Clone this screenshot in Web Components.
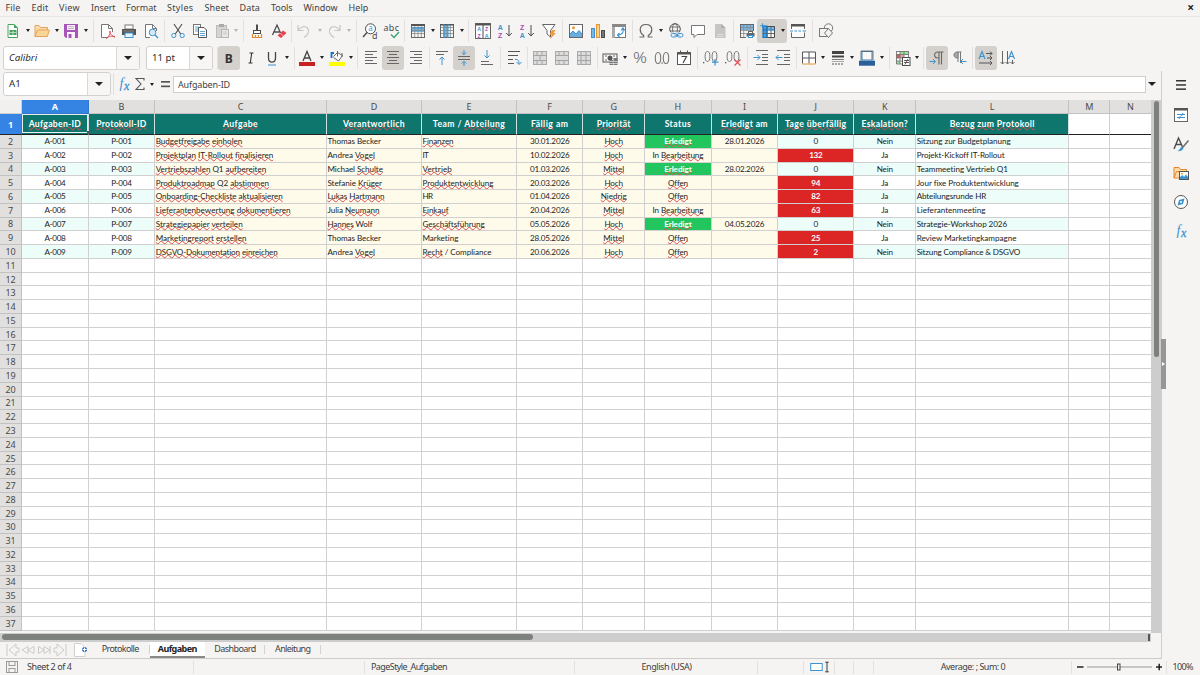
<!DOCTYPE html>
<html lang="de">
<head>
<meta charset="utf-8">
<title>Aufgaben</title>
<style>
    html, body {
        margin: 0;
        height: 675px;
        overflow: hidden;
        background: #f5f4f3;
        color: #424242;
        font: 9px/1 "Noto Sans", sans-serif;
    }
</style>
</head>
<body>
<calc-window></calc-window>

<script>
const K = '#4c4c4c';
const B = '#3b93d2';

const line = (d, c = K, w = 1) => `<path d="${d}" fill="none" stroke="${c}" stroke-width="${w}"/>`;
const fill = (d, c = K) => `<path d="${d}" fill="${c}"/>`;
const box = (x, y, w, h, f = 'none', s = 'none') => `<rect x="${x}" y="${y}" width="${w}" height="${h}" fill="${f}" stroke="${s}"/>`;
const glyph = (x, y, size, text, c = K, extra = '') => `<text x="${x}" y="${y}" font-size="${size}" fill="${c}" font-family="Noto Sans" ${extra}>${text}</text>`;
const letter = (x, y, size, text, c) => `<text x="${x}" y="${y}" font-size="${size}" fill="${c}" font-family="Liberation Sans" font-weight="700">${text}</text>`;
const gridLines = line('M1.500 4.500H14.500M1.500 7.500H14.500M1.500 10.500H14.500M4.700 2V14M8 2V14M11.300 2V14', '#888', .8) + box(1.5, 1.5, 13, 13, 'none', '#666');
const mergeIcon = inner => box(1.5, 1.5, 13, 13, '#dcdcdc', '#aaa') + line('M1.500 5.500H14.500M1.500 10.500H14.500' + inner, '#a4a4a4');

// All icons share a 16 x 16 box
const ICONS = {
    new: fill('M2.500 1.500H9L13 5.500V14.500H2.500Z', '#fff') + line('M3 1.500H9L12.500 5V14.500H3Z', '#45a45c') + fill('M9 1L13 5H9Z', '#45a45c') + box(4.5, 7, 7, 5, '#45a45c') + line('M5 9.500H11M8 7.500V12', '#d9f2df', .7),
    open: fill('M1 13.500V2.500H5L6.500 4.500H13V7', '#fbdca8') + line('M1 13.500V2.500H5L6.500 4.500H13.500V7', '#e2a45b') + fill('M1 14L3.500 7H15.500L13.500 14Z', '#fbd596') + line('M1 13.500L3.500 7H15.300L13.300 13.500Z', '#e2a45b'),
    save: fill('M1 1H15V15H3L1 13Z', '#a855ba') + box(4, 2, 8, 5, '#fbf4fc') + box(4, 9, 8, 6, '#fbf4fc') + line('M5 3.700H11M5 5.500H11', '#b99bc2', .8) + box(5.5, 11, 3, 4, '#a855ba'),
    pdf: fill('M2.500 1.500H9.500L13 5V14.500H2.500Z', '#fff') + line('M9 14.500H2.500V1.500H9.500L13.500 5.500V9M9.500 1.500V5.500H13.500', '#777') + line('M7.500 15.500C11 12 11.500 10 11 8C10.300 10 12.500 13 16 14C13 12.500 10 13 7.500 15.500Z', '#d9383f', .9),
    print: box(4, 2, 8, 4, '#fff', '#777') + fill('M1 6H15V12H1Z', '#555') + box(4, 10, 8, 4.5, '#e8f3fb', B) + line('M2.500 8H13', '#999', .7),
    preview: fill('M2.500 1.500H9.500L13 5V14.500H2.500Z', '#fff') + line('M7 14.500H2.500V1.500H9.500L13.500 5.500V8M9.500 1.500V5.500H13.500', '#777') + '<circle cx="9.500" cy="9.500" r="3.300" fill="#d5eaf8" stroke="#3b93d2"/>' + line('M12 12L15 15', B, 1.4),
    cut: line('M4 1L10.700 11M12 1L5.300 11', K, 1.1) + '<circle cx="3.800" cy="12.500" r="2.100" fill="none" stroke="#3b93d2"/><circle cx="12.200" cy="12.500" r="2.100" fill="none" stroke="#3b93d2"/>',
    copy: box(1.5, 1.5, 7, 10, '#fff', '#777') + line('M3 4H7M3 6H7M3 8H7', B, .8) + fill('M6.500 4.500H12L14.500 7V14.500H6.500Z', '#fff') + line('M6.500 4.500H12L14.500 7V14.500H6.500Z', '#555') + line('M8 8.500H13M8 10.500H13M8 12.500H13', B, .8),
    paste: box(2.5, 2.5, 10, 12, '#d4d4d4', '#bcbcbc') + box(5, 1, 5, 3, '#aaa') + box(7.5, 6.5, 7, 8, '#e9e9e9', '#b5b5b5') + line('M9 9H13M9 11H13', '#bbb', .8),
    brush: line('M8 1.500V7', K, 2) + box(4.5, 7.5, 7, 3, '#fff', K) + fill('M3.500 11H12.500V15H3.500Z', '#fff') + line('M3.500 11V14.500H12.500V11M6.500 12V14.500M9.500 12V14.500', '#e7852b', 1.2),
    clear: line('M1.500 12L6 2L10.500 12M3.500 9H8.500', K, 1.3) + fill('M6.500 12.500L12 7.500L15.500 10L10 15Z', '#e7404c') + line('M9 10L12.500 13', '#fff', .6),
    undo: line('M2 2V7.500H7.500M2.500 7C5 3.500 9 2.500 11.500 5C14 8 12 12 8 14.500', '#c6c6c6', 1.2),
    redo: line('M14 2V7.500H8.500M13.500 7C11 3.500 7 2.500 4.500 5C2 8 4 12 8 14.500', '#c6c6c6', 1.2),
    find: '<circle cx="8.500" cy="5.800" r="5" fill="#fff" stroke="#4c4c4c"/>' + line('M5 9.500L1 14', K, 1.4) + glyph(6.2, 8.4, 8, 'a', B) + glyph(10, 15.5, 9, 'd'),
    spell: glyph(-.5, 8, 9, 'abc', K, 'textLength="15.500"') + line('M7 11.500L10 14.500L15 9', '#36a66a', 1.3),
    row: box(1, 5, 14, 4, '#76b9e8') + gridLines + line('M1 5H15', B) + box(1, 1, 14, 2, '#555'),
    column: box(5, 1, 4, 14, '#76b9e8') + gridLines + box(1, 1, 14, 1.500, '#555') + line('M5 1V15M9 1V15', B),
    sort: box(.5, .5, 15, 15, '#fff', '#666') + box(.5, .5, 15, 2, '#555') + line('M8 1V15') + letter(2.2, 8.4, 5.3, 'A', B) + letter(2.4, 14.700, 5.3, 'Z', '#b345bb') + letter(9.900, 8.4, 5.3, 'Z', '#b345bb') + letter(9.700, 14.700, 5.3, 'A', B),
    asc: letter(.800, 6.5, 7, 'A', B) + letter(1, 15, 7, 'Z', '#b345bb') + line('M12 2V12.500M9.200 10L12 13L14.800 10'),
    desc: letter(1, 6.5, 7, 'Z', '#b345bb') + letter(.800, 15, 7, 'A', B) + line('M12 2V12.500M9.200 10L12 13L14.800 10'),
    filter: fill('M1.500 1.500H14L9.500 7.500V14L6 11V7.500Z', '#fff') + line('M1.500 1.500H14L9.500 7.500V14L6 11V7.500Z', '#666') + fill('M11 7H14.500L12.500 10H15L9 16L10.700 11.500H8.500Z', '#ef9b38'),
    image: box(1.5, 1.5, 13, 13, '#fff', '#666') + fill('M2 14V11L5 8L8 11L11 7.500L14 11V14Z', '#68afe0') + line('M2 11L5 8L8 11L11 7.500L14 11', B) + '<circle cx="5.500" cy="4.800" r="1.500" fill="#ef9b38"/>',
    chart: box(1.5, 5.5, 3, 9, '#76b9e8', B) + box(6.5, 1.5, 3, 13, '#fbd08d', '#e7952f') + box(11.5, 7.5, 3, 7, '#777', K),
    pivot: box(1.5, 1.5, 13, 13, '#fff', '#777') + box(1, 1, 14, 3, '#888') + box(1, 4, 3, 11, '#aaa') + line('M12 5.500C13 9 11 12 7 12M10 7.500L12 5L14 7.500M8.500 10L6.500 12L8.500 14', B, 1.1),
    omega: line('M1.500 14H5.700V12.500C3.500 11 2.200 9 2.200 6.700C2.200 3.500 4.500 1.500 8 1.500S13.800 3.500 13.800 6.700C13.800 9 12.500 11 10.300 12.500V14H14.500', '#666', 1.2),
    link: '<circle cx="7" cy="6" r="5.300" fill="none" stroke="#555"/><ellipse cx="7" cy="6" rx="2.400" ry="5.300" fill="none" stroke="#555" stroke-width=".8"/>' + line('M2 4H12M2 8H12', '#555', .8) + box(2, 9.500, 13, 5, '#f5f4f3') + '<rect x="3" y="10.500" width="6" height="3.500" rx="1.700" fill="none" stroke="#3b93d2"/><rect x="9" y="10.500" width="6" height="3.500" rx="1.700" fill="none" stroke="#3b93d2"/>' + line('M6.500 12.200H11.500', B),
    comment: fill('M1.500 2.500H14.500V11.500H7L4 14.500V11.500H1.500Z', '#fff') + line('M1.500 2.500H14.500V11.500H7L4 14.500V11.500H1.500Z', '#777'),
    header: fill('M3 1H9.500L13.500 5V15H3Z', '#c6c6c6') + fill('M9.500 1L13.500 5H9.500Z', '#aaa') + line('M5 11.500H11.500M5 13.500H11.500', '#ddd'),
    range: box(1, 1, 14, 6, '#76b9e8') + gridLines + box(7, 8, 9, 8, '#f5f4f3') + box(7.500, 10, 8, 3.5, '#666') + box(9.5, 8.500, 4, 2, '#fff', '#666') + box(9.5, 12.500, 4, 2, '#fff', B),
    freeze: box(3, 3, 12, 12, '#f8f8f8') + box(3, 3, 12, 4, '#76b9e8') + box(3, 3, 4, 12, '#4a9bdb') + line('M3 10.500H15M7 3V15M11 3V15', '#666') + line('M7 3.500H14.500V14.500H7', K) + line('M3 3H7V15M3 7H15M3 3V14.500H7', '#1872bd', 1.2) + line('M2.500 .300V5M.200 2.700H5', B),
    split: box(1.5, 1.5, 13, 13, '#fbfbfb') + line('M1.500 6V1.500H14.500V6M1.500 9.500V14.500H14.500V9.500', '#666') + box(1, 1, 14, 2.5, '#555') + line('M0 8H3M4.500 8H7M8.500 8H11M12.500 8H16', B, 1),
    shapes: '<circle cx="10.500" cy="5" r="4.200" fill="#f5f4f3" stroke="#777"/>' + box(1.5, 5.5, 8, 8, '#f5f4f3', '#777') + fill('M10.500 5.500L15 10L10.500 14.500L6 10Z', '#f5f4f3') + line('M10.500 5.500L14.500 10L10.500 14.500L6.500 10Z', '#777'),
    bold: glyph(3.800, 12.7, 13, 'B', '#333', 'font-weight="700" textLength="8" lengthAdjust="spacingAndGlyphs"'),
    italic: line('M6.500 3H10.500M5.500 13H9.500M8.700 3L7.300 13', '#333', 1.1),
    underline: line('M4.500 2V8C4.500 13.500 11.500 13.500 11.500 8V2', '#444', 1.3) + line('M4 15H12', B, 1),
    fontColor: line('M4 11L8 1.500L12 11M5.500 8H10.500', '#444', 1.3) + box(0, 12, 16, 4, '#c9211e'),
    fillColor: fill('M5 6L9 2.500L14 6L10 10.500Z', '#fff') + line('M4.500 6.500L8.500 2.500L13.500 5.500L9.500 11L4.500 7.500M8.500 1V6.500M13 3V7', '#666') + line('M2.500 8V3H5', '#1872bd', 1.8) + box(0, 12, 16, 4, '#ffff00'),
    left: line('M2 1.500H14M2 4.500H10M2 7.500H14M2 10.500H10M2 13.500H14', '#666'),
    center: line('M2 1.500H14M4 4.500H12M2 7.500H14M4 10.500H12M2 13.500H14', '#666'),
    right: line('M2 1.500H14M6 4.500H14M2 7.500H14M6 10.500H14M2 13.500H14', '#666'),
    top: line('M2 1.500H14M2 4.500H10', '#666') + line('M8 15V7M5.500 9.500L8 7L10.500 9.500', B),
    middle: line('M2 6.500H14M2 9.500H14', '#666') + line('M8 0V4.500M5.800 2.500L8 4.700L10.200 2.500M8 16V11.500M5.800 13.500L8 11.300L10.200 13.500', B),
    bottom: line('M2 11.500H10M2 14.500H14', '#666') + line('M8 0V8M5.500 5.500L8 8L10.500 5.500', B),
    wrap: line('M2 1.500H14M2 5.500H12M2 9.500H7M2 13.500H8', '#555') + line('M9 9.500C12 9 13 10.500 13 14M10.500 12L13 14.500L15.500 12', B),
    merge1: mergeIcon('M5 5.500V1.500M10 5.500V1.500M8 5.500V10.500M5 10.500V14.500M10 10.500V14.500'),
    merge2: mergeIcon('M5 5.500V1.500M10 5.500V1.500M5 10.500V14.500M10 10.500V14.500'),
    merge3: mergeIcon('M5 14.500V1.500M10 14.500V1.500'),
    currency: box(1, 4, 14, 8, '#fafafa', '#555') + '<circle cx="8" cy="8" r="2.500" fill="#555"/>' + line('M3 6H5M3 10H5M11 6H13', '#666') + box(7.5, 10, 3.5, 5, '#777') + box(11.5, 8, 4, 7, '#777') + line('M7.500 11.500H15.500M7.500 13.500H15.500', '#fff', .6),
    percent: glyph(1, 13, 14, '%', '#666', 'textLength="14" lengthAdjust="spacingAndGlyphs" font-weight="300"'),
    number: '<ellipse cx="4" cy="8" rx="2.700" ry="5.500" fill="none" stroke="#777" stroke-width="1.100"/><ellipse cx="12" cy="8" rx="2.700" ry="5.500" fill="none" stroke="#777" stroke-width="1.100"/><rect x="7.500" y="12.500" width="1.200" height="1.200" fill="#555"/>',
    date: box(1.5, 2.5, 13, 12, '#fff', '#555') + box(1, 2, 14, 2.5, '#555') + line('M4.500 .500V3M11.500 .500V3', '#555') + line('M5.500 6.500H10.500L7 13', '#444', 1.2),
    addDecimal: box(0, 12, 1.300, 1.300, '#555') + '<ellipse cx="4.500" cy="6.500" rx="2.400" ry="5" fill="none" stroke="#777"/><ellipse cx="11.500" cy="6.500" rx="2.400" ry="5" fill="none" stroke="#777"/>' + line('M12 9V15.500M9 12.200H15.500', B, 1.2),
    delDecimal: box(0, 12, 1.300, 1.300, '#555') + '<ellipse cx="4.500" cy="6.500" rx="2.400" ry="5" fill="none" stroke="#777"/><ellipse cx="11.500" cy="6.500" rx="2.400" ry="5" fill="none" stroke="#777"/>' + line('M9.500 9.500L15.500 15.500M15.500 9.500L9.500 15.500', '#e34b53', 1.1),
    indent: line('M3 .500H15M9 4.500H15M9 7.500H15M9 10.500H15M3 14.500H15', '#666') + line('M.500 7.500H7M4.500 5L7 7.500L4.500 10', B),
    outdent: line('M2 .500H15M9 4.500H15M9 7.500H15M9 10.500H15M2 14.500H15', '#666') + line('M7.500 7.500H1M3.500 5L1 7.500L3.500 10', B),
    border: box(2, 2, 12, 12, '#fff') + line('M1.500 13.500V2H14.500V13.500M8 2V13.500M1.500 8H14.500', '#555') + line('M1.500 14H14.500', '#e7952f'),
    lineStyle: box(2, 1, 12, 3, '#444') + box(2, 5.500, 12, 2, '#444') + line('M2 9.500H14', '#777', 1) + line('M2 11.500H14', '#aaa', 1) + line('M2 14H14', '#555', 1.2).replace('/>', ' stroke-dasharray="2 1"/>'),
    borderColor: box(3, 1.500, 10, 8.500, '#f8f8f8', '#4280b5') + line('M2 10.500V1H14V10.500', '#555', .8) + box(0, 10.700, 16, 5, '#2a6099'),
    conditional: box(1, 1, 13, 13, '#fff') + box(1, 4, 4, 4, '#de5a5a') + box(5, 1, 9, 3.5, '#9be39b') + box(5, 4.5, 4, 3.5, '#f0a0a0') + box(1, 11, 4, 3, '#9be39b') + line('M1 4.500H14M1 8H8M1 11H8M5 1V14M9 1V7M1.500 1V14H8M13.500 1V7M1 1.500H14', '#777', .9) + box(7.500, 7.500, 7.500, 8, '#fff', K) + line('M9 10.500H14M9 12.500H14M13 9L10 14.500', K, .9),
    ltr: line('M14.500 2H9C4.500 2 4.500 8 9 8H10M10 2V14.500M12.500 2V14.500', '#666', 1.1) + line('M.500 11.500H6M4 9L6.500 11.500L4 14', B),
    rtl: fill('M7.500 2C1.500 1.500 1.500 8 7.500 8Z', '#aaa') + line('M10.500 2H6C2 2 2 8 6 8H7M7 2V12M9.500 2V13', '#777') + line('M15.500 11.500H9.500M12 9L9.500 11.500L12 14', B),
    textLtr: line('M1 9L4 1.500L7 9M2 6.500H6', B, 1.2) + line('M8 3.500H14M12 1.500L14 3.500L12 5.500M9 8H14M12 6L14 8L12 10M1 13H14M12 11L14 13L12 15', '#555'),
    textTtb: line('M8.500 9L11.500 1.500L14.500 9M9.500 6.500H13.500', B, 1.2) + line('M2.500 1V14M.500 12L2.500 14L4.500 12M7.500 1V14M5.500 12L7.500 14L9.500 12M12.500 10V14M10.500 12L12.500 14L14.500 12', '#666'),
    func: '<text x="3.500" y="12" font-family="Liberation Serif" font-style="italic" font-size="14" fill="#3b93d2">f</text><text x="8" y="13.500" font-family="Liberation Serif" font-style="italic" font-size="12" fill="#3b93d2" stroke="#3b93d2" stroke-width=".300">x</text>',
    sigma: line('M12 4.500V2.500H4L9 8L4 13.500H12V11.500', '#555', 1.1),
    equals: box(4, 5, 9, 1.7, '#555') + box(4, 9.500, 9, 1.7, '#555'),
    hamburger: box(3, 3, 10, 1.500, '#333') + box(3, 7.200, 10, 1.500, '#333') + box(3, 11.400, 10, 1.500, '#333'),
    properties: box(1.5, 1.5, 13, 13, '#fff', '#666') + box(1, 1, 14, 2.500, '#555') + line('M4 7.500H12M4 10.500H12M10 6L8.500 9M7.500 9L6 12', B, 1),
    styles: line('M1 13L5.500 2L10 12M3 8.500H8.500', K, 1.4) + line('M15.500 4.500L10 11', '#777', 1.7) + fill('M4 15C7 15 6.500 11.500 9 11C12 12 9 16 4 15Z', B),
    gallery: fill('M1 13V2H6L7.500 4H13V13Z', '#fbdca8') + line('M1 13V2.500H6L7.500 4.500H13.500V6M1 13H6M1 13L3.500 6.500H14', '#e7852b') + box(6.5, 6.500, 9, 8, '#fff', '#555') + fill('M7 14V12L9.500 10L11 12L13 9.500L15 12V14Z', B) + '<circle cx="9" cy="8.700" r=".900" fill="#e7952f"/>',
    navigator: '<circle cx="8" cy="8" r="6.500" fill="#fff" stroke="#555"/>' + fill('M11.500 4.500L10 10L4.500 11.500L6 6Z', B) + '<circle cx="8" cy="8" r="1" fill="#fff"/>',
    disk: box(2.5, 2.5, 11, 11, '#f5f4f3', '#999') + box(5, 2.5, 6, 4, 'none', '#999') + box(5, 9.5, 6, 4, 'none', '#999'),
    selection: box(.7, 4.500, 11.5, 7, '#fff', B),
    cursor: line('M6 2.500H10M6 13.500H10M8 2.500V13.500', '#333', 1.1),
};

class TbIcon extends HTMLElement {
    constructor() {
        super();
        this.attachShadow({ mode: 'open' });
    }

    connectedCallback() {
        this.shadowRoot.innerHTML = `
            <style>
                :host { display: block; flex: none; width: 16px; height: 16px; }
                svg { display: block; width: 100%; height: 100%; overflow: visible; }
            </style>
            <svg viewBox="0 0 16 16">${ICONS[this.getAttribute('name')] || ''}</svg>
        `;
    }
}
customElements.define('tb-icon', TbIcon);

class DropArrow extends HTMLElement {
    constructor() {
        super();
        this.attachShadow({ mode: 'open' });
        this.shadowRoot.innerHTML = `
            <style>
                :host { display: flex; justify-content: center; align-items: center; flex: none; color: #222; }
                i { border: solid transparent; border-width: 3px 2.500px 0; border-top-color: currentColor; }
                :host([big]) i { border-width: 4px 4px 0; border-top-color: currentColor; }
                :host([dim]) i { opacity: .3; }
            </style>
            <i></i>
        `;
    }
}
customElements.define('drop-arrow', DropArrow);

/**
 * Items are separated by spaces: name:width[:arrowWidth][:flags].
 * A "|" item is a separator, flag "on" is a pressed button, "dim" a disabled arrow.
 */
class ToolStrip extends HTMLElement {
    constructor() {
        super();
        this.attachShadow({ mode: 'open' });
    }

    connectedCallback() {
        const items = this.getAttribute('items').trim().split(/\s+/).map(item => {
            const [name, width, arrow, flag] = item.split(':');
            if (name === '|') {
                return `<span class="sep" style="width:${width}px"></span>`;
            }
            const menu = +arrow ? `<drop-arrow style="width:${arrow}px" ${flag === 'dim' ? 'dim' : ''}></drop-arrow>` : '';
            return `<span class="tool ${flag === 'on' ? 'on' : ''}"><span class="icon" style="width:${width}px"><tb-icon name="${name}"></tb-icon></span>${menu}</span>`;
        });
        this.shadowRoot.innerHTML = `
            <style>
                :host { display: flex; align-items: center; height: 27px; }
                .tool { display: flex; align-items: center; height: 24px; border-radius: 3px; }
                .on { background: #d4d0cc; }
                .icon { display: flex; justify-content: center; }
                drop-arrow { height: 24px; }
                .sep { height: 22px; background: linear-gradient(#e2e0de, #e2e0de) center / 1px 100% no-repeat; }
            </style>
            ${items.join('')}
        `;
    }
}
customElements.define('tool-strip', ToolStrip);

class ComboBox extends HTMLElement {
    constructor() {
        super();
        this.attachShadow({ mode: 'open' });
        this.shadowRoot.innerHTML = `
            <style>
                :host {
                    display: flex; box-sizing: border-box; height: 24px; flex: none;
                    border: 1px solid #d3d0cd; border-radius: 3px; background: #fff; overflow: hidden;
                    font-size: 9.700px; color: #2e2e2e;
                }
                .text { flex: 1; padding-left: 5px; line-height: 21px; }
                drop-arrow { width: 22px; background: #f7f6f5; border-left: 1px solid #dad7d4; }
            </style>
            <span class="text"><slot></slot></span><drop-arrow big></drop-arrow>
        `;
    }
}
customElements.define('combo-box', ComboBox);

// Text run with a known width; the difference goes into the letter spacing
class FitText extends HTMLElement {
    constructor() {
        super();
        this.attachShadow({ mode: 'open' });
        this.shadowRoot.innerHTML = `
            <style>
                :host { display: inline-block; white-space: nowrap; }
                ::slotted(u) {
                    text-decoration: underline wavy #e04a4a .600px;
                    text-decoration-skip-ink: none;
                    text-underline-offset: -.800px;
                }
            </style>
            <slot></slot>
        `;
    }

    connectedCallback() {
        const target = parseFloat(this.getAttribute('width'));
        if (!target) {
            return;
        }
        const natural = this.getBoundingClientRect().width;
        const spacing = (target - natural) / this.textContent.length;
        this.style.letterSpacing = `${spacing.toFixed(3)}px`;
    }
}
customElements.define('fit-text', FitText);

class MenuBar extends HTMLElement {
    constructor() {
        super();
        this.attachShadow({ mode: 'open' });
    }

    connectedCallback() {
        const menus = [['File', 15, 11], ['Edit', 17, 10.5], ['View', 21, 11], ['Insert', 24.5, 10.5], ['Format', 30.5, 10.5], ['Styles', 26.5, 11], ['Sheet', 24.5, 10.5], ['Data', 20.5, 11], ['Tools', 21.5, 11], ['Window', 34, 11], ['Help', 20, 0]];
        this.shadowRoot.innerHTML = `
            <style>
                :host { display: flex; box-sizing: border-box; height: 17px; padding: 0 6px 0 5.500px; border-bottom: 1px solid #e9e7e5; line-height: 16px; }
                b { margin-left: auto; font-size: 12px; color: #222; }
            </style>
            ${menus.map(([name, w, gap]) => `<fit-text width="${w}" style="margin-right:${gap}px">${name}</fit-text>`).join('')}
            <b>×</b>
        `;
    }
}
customElements.define('menu-bar', MenuBar);

const COLUMNS = [
    ['A', 66.5], ['B', 66.5], ['C', 171.7], ['D', 95.1], ['E', 95.2], ['F', 66], ['G', 62],
    ['H', 66.5], ['I', 66.5], ['J', 76.2], ['K', 61.8], ['L', 153], ['M', 41.2], ['N', 41.3],
];

// An underscore before a word marks it for the spell checker
const HEADERS = [
    ['_Aufgaben-ID', 52.5], ['_Protokoll-ID', 50.5], ['_Aufgabe', 35], ['_Verantwortlich', 62],
    ['Team / _Abteilung', 72.5], ['_Fällig am', 37.5], ['_Priorität', 34], ['Status', 26.5],
    ['_Erledigt am', 47], ['_Tage _überfällig', 61.5], ['_Eskalation?', 46.5], ['_Bezug _zum _Protokoll', 85],
];

const ROWS = [
    ['_Budgetfreigabe _einholen', 86.5, 'Thomas Becker', 53.5, '_Finanzen', 31, '30.01.2026', '_Hoch', '_Erledigt', '28.01.2026', '0', 'Nein', 'Sitzung zur Budgetplanung', 94],
    ['_Projektplan _IT-Rollout _finalisieren', 117.5, 'Andrea _Vogel', 47.5, 'IT', 5.5, '10.02.2026', '_Hoch', 'In _Bearbeitung', '', '132', 'Ja', 'Projekt-Kickoff IT-Rollout', 87.5],
    ['_Vertriebszahlen Q1 _aufbereiten', 110.5, 'Michael _Schulte', 55.5, '_Vertrieb', 29.5, '01.03.2026', '_Mittel', '_Erledigt', '28.02.2026', '0', 'Nein', 'Teammeeting Vertrieb Q1', 91.5],
    ['_Produktroadmap Q2 _abstimmen', 113.5, 'Stefanie _Krüger', 54.5, '_Produktentwicklung', 71, '20.03.2026', '_Hoch', '_Offen', '', '94', 'Ja', 'Jour fixe Produktentwicklung', 102],
    ['_Onboarding-Checkliste _aktualisieren', 127, '_Lukas _Hartmann', 57, 'HR', 10, '01.04.2026', '_Niedrig', '_Offen', '', '82', 'Ja', 'Abteilungsrunde HR', 69.5],
    ['_Lieferantenbewertung _dokumentieren', 135, 'Julia _Neumann', 52, '_Einkauf', 26, '20.04.2026', '_Mittel', 'In _Bearbeitung', '', '63', 'Ja', 'Lieferantenmeeting', 69],
    ['_Strategiepapier _verteilen', 87, '_Hannes Wolf', 45, '_Geschäftsführung', 62, '05.05.2026', '_Hoch', '_Erledigt', '04.05.2026', '0', 'Nein', 'Strategie-Workshop 2026', 90.5],
    ['_Marketingreport _erstellen', 91, 'Thomas Becker', 53.5, 'Marketing', 36, '28.05.2026', '_Mittel', '_Offen', '', '25', 'Ja', 'Review Marketingkampagne', 100],
    ['_DSGVO-Dokumentation _einreichen', 122, 'Andrea _Vogel', 47.5, '_Recht / Compliance', 69, '20.06.2026', '_Hoch', '_Offen', '', '2', 'Nein', 'Sitzung Compliance &amp; DSGVO', 103.5],
];

const WIDTHS = {
    '_Hoch': 18.5, '_Mittel': 20.5, '_Niedrig': 26, '_Erledigt': 27.5, 'In _Bearbeitung': 51,
    '_Offen': 19.5, 'Nein': 16, 'Ja': 7, '0': 4.5, '132': 13, '94': 9, '82': 9, '63': 9, '25': 9, '2': 4.5,
};

const run = (text, width) => text ? `<fit-text width="${width}">${text.replace(/_(\S+)/g, '<u>$1</u>')}</fit-text>` : '';

class SheetGrid extends HTMLElement {
    constructor() {
        super();
        this.attachShadow({ mode: 'open' });
    }

    connectedCallback() {
        this.shadowRoot.innerHTML = `
            <style>
                :host {
                    display: grid; width: 1151px; box-sizing: border-box; overflow: hidden;
                    grid-template-columns: 22.200px ${COLUMNS.map(([, w]) => w + 'px').join(' ')};
                    grid-template-rows: 14px 21px repeat(36, 13.772px);
                }
                div {
                    box-sizing: border-box; display: flex; align-items: center; justify-content: center;
                    min-width: 0; min-height: 0; white-space: nowrap; line-height: 12px;
                    border-right: 1px solid #d0d0d0; border-bottom: 1px solid #d0d0d0;
                }
                .corner { background: #f1f0ef; border-color: #cfcfcf; }
                .col, .num { background: #e1e0df; color: #4a4a4a; border-color: #c2c2c2; font-size: 9px; }
                .sel { background: #3584e4; color: #fff; border-color: #2f77cf; }
                .col.sel, .num.sel { font-weight: 700; }
                .num { padding-top: 1px; }
                .cell { background: #fff; color: #222; font: 8.100px/12px Lato, sans-serif; }
                .head { background: #0f766e; color: #fff; font-size: 8.600px; font-weight: 700; border-right-color: #cfe0de; }
                .first { border-bottom-color: #222; }
                .text { justify-content: flex-start; padding-left: .500px; }
                .mint { background: #edfdf9; }
                .cream { background: #fffbeb; }
                .done { background: #22c55e; color: #fff; font-weight: 700; }
                .late { background: #dc2626; color: #fff; font-weight: 700; }
                .active { position: relative; }
                .active::before { content: ""; position: absolute; inset: 0 0 1px 0; border: 1px solid #e8efee; }
                .active::after { content: ""; position: absolute; right: -2px; bottom: 0; width: 3px; height: 3px; background: #555; }
            </style>
            <div class="corner"></div>
            ${COLUMNS.map(([name]) => `<div class="col ${name === 'A' ? 'sel' : ''}">${name}</div>`).join('')}
            ${this.#headerRow()}
            ${ROWS.map((row, i) => this.#dataRow(row, i)).join('')}
            ${this.#emptyRows(11, 37)}
        `;
    }

    #headerRow() {
        const cells = HEADERS.map(([text, w], i) => `<div class="cell head first ${i ? '' : 'active'}">${run(text, w)}</div>`);
        return `<div class="num sel first">1</div>${cells.join('')}<div class="cell first"></div><div class="cell first"></div>`;
    }

    #dataRow(row, index) {
        const [task, taskW, person, personW, team, teamW, due, priority, status, closed, late, escalation, topic, topicW] = row;
        const shade = index % 2 ? '' : 'mint';
        const id = String(index + 1).padStart(3, '0');
        const cells = [
            [shade, `A-${id}`, 21],
            [shade, `P-${id}`, 20.5],
            ['cream text', task, taskW],
            ['cream text', person, personW],
            ['cream text', team, teamW],
            ['cream', due, 39.5],
            ['cream', priority, WIDTHS[priority]],
            [status === '_Erledigt' ? 'done' : 'cream', status, WIDTHS[status]],
            ['cream', closed, 39.5],
            [late === '0' ? shade : 'late', late, WIDTHS[late]],
            [shade, escalation, WIDTHS[escalation]],
            [`${shade} text`, topic, topicW],
            ['', '', 0],
            ['', '', 0],
        ];
        return `<div class="num">${index + 2}</div>` + cells.map(([cls, text, w]) => `<div class="cell ${cls}">${run(text, w)}</div>`).join('');
    }

    #emptyRows(from, to) {
        let html = '';
        for (let n = from; n <= to; n++) {
            html += `<div class="num">${n}</div>` + '<div class="cell"></div>'.repeat(COLUMNS.length);
        }
        return html;
    }
}
customElements.define('sheet-grid', SheetGrid);

class SheetTabs extends HTMLElement {
    constructor() {
        super();
        this.attachShadow({ mode: 'open' });
        this.shadowRoot.innerHTML = `
            <style>
                :host { display: flex; height: 16px; line-height: 14px; border-bottom: 1px solid #cdcbc9; }
                .nav { width: 62px; margin-left: 5.500px; }
                svg { display: block; }
                .add { width: 24px; margin-left: 6.500px; }
                .tab { box-sizing: border-box; display: flex; justify-content: center; height: 16px; background: linear-gradient(#d3d1cf, #d3d1cf) right 3px / 1px 9px no-repeat; }
                .wide { padding-right: 7px; }
                .active { background: #fff; font-weight: 700; color: #222; border-bottom: 2px solid #8a8a8a; }
            </style>
            <div class="nav"><svg width="62" height="16" fill="none" stroke="#cdcbc9"><path d="M1 2V14M10 2L3 8L10 14V10H13V6H10ZM22 4.500L16 8L22 11.500ZM28 4.500L22 8L28 11.500ZM32.500 4.500V11.500L38 8ZM38 4.500V11.500L44 8ZM44 4V12M48 6V10H51V14L58 8L51 2V6ZM60 2V14"/></svg></div>
            <div class="add"><svg width="16" height="16"><path d="M.500 1.500H7L11 5.500V14.500H.500Z" fill="#fff" stroke="#d3d1cf"/><circle cx="10.500" cy="7.500" r="2.500" fill="#2f6db5"/><path d="M10.500 5.500V9.500M8.500 7.500H12.500" stroke="#fff"/></svg></div>
            <div class="tab wide" style="width:51.500px"><fit-text width="37">Protokolle</fit-text></div>
            <div class="tab active" style="width:55.500px"><fit-text width="39">Aufgaben</fit-text></div>
            <div class="tab" style="width:60px"><fit-text width="41.500">Dashboard</fit-text></div>
            <div class="tab" style="width:55.500px"><fit-text width="35.500">Anleitung</fit-text></div>
        `;
    }
}
customElements.define('sheet-tabs', SheetTabs);

class SideBar extends HTMLElement {
    constructor() {
        super();
        this.attachShadow({ mode: 'open' });
        this.shadowRoot.innerHTML = `
            <style>
                :host { display: flex; flex-direction: column; align-items: center; flex: 1; gap: 13px; padding-top: 5.500px; box-sizing: border-box; border-left: 1px solid #d0cecc; position: relative; }
                tb-icon:nth-of-type(2) { margin-top: 1.500px; }
                .handle { position: absolute; left: -1px; top: 268px; width: 5px; height: 50px; background: #979695; display: flex; align-items: center; }
                .handle::after { content: ""; border: solid transparent; border-width: 2.500px 0 2.500px 3px; border-left-color: #fff; margin-left: 1px; }
            </style>
            <tb-icon name="hamburger"></tb-icon>
            <tb-icon name="properties"></tb-icon>
            <tb-icon name="styles"></tb-icon>
            <tb-icon name="gallery"></tb-icon>
            <tb-icon name="navigator"></tb-icon>
            <tb-icon name="func"></tb-icon>
            <span class="handle"></span>
        `;
    }
}
customElements.define('side-bar', SideBar);

class StatusBar extends HTMLElement {
    constructor() {
        super();
        this.attachShadow({ mode: 'open' });
        this.shadowRoot.innerHTML = `
            <style>
                :host { display: flex; height: 16px; align-items: center; }
                span { box-sizing: border-box; display: flex; justify-content: center; align-items: center; height: 13px; border-right: 1px solid #e3e1df; flex: none; }
                span:last-child { border: 0; }
                .start { justify-content: flex-start; }
                fit-text { line-height: 14px; }
                svg { display: block; }
            </style>
            <span class="start" style="width:193.500px;padding-left:4px"><tb-icon name="disk" style="margin-right:7px"></tb-icon><fit-text width="44.500">Sheet 2 of 4</fit-text></span>
            <span style="width:171px"></span>
            <span class="start" style="width:210.500px;padding-left:6.500px"><fit-text width="76">PageStyle_Aufgaben</fit-text></span>
            <span style="width:183px;padding-left:1px"><fit-text width="50">English (USA)</fit-text></span>
            <span style="width:46px"></span>
            <span class="start" style="width:31px;padding-left:6px"><tb-icon name="selection" style="margin-right:-5px"></tb-icon><tb-icon name="cursor" style="width:14px;margin-left:-1px"></tb-icon></span>
            <span style="width:19px"></span>
            <span style="width:20px"></span>
            <span style="width:198px;padding-left:1px"><fit-text width="64.500">Average: ; Sum: 0</fit-text></span>
            <span style="width:95px"><svg width="86" height="12"><path d="M1 6H7.500M80 6H86.500M83.200 2.800V9.200" stroke="#222" stroke-width="1.500"/><path d="M11 6H76" stroke="#999"/><rect x="41.500" y="3" width="2.500" height="6" fill="#eee" stroke="#444"/></svg></span>
            <span style="width:31.500px"><fit-text width="20.500">100%</fit-text></span>
        `;
    }
}
customElements.define('status-bar', StatusBar);

class CalcWindow extends HTMLElement {
    constructor() {
        super();
        this.attachShadow({ mode: 'open' });
    }

    connectedCallback() {
        this.shadowRoot.innerHTML = `
            <style>
                :host { display: flex; flex-direction: column; width: 1200px; height: 675px; }
                .standard { padding-left: 2px; }
                .format { display: flex; align-items: center; height: 27px; padding-left: 3px; }
                .middle { display: flex; height: 588px; }
                .left { width: 1161px; display: flex; flex-direction: column; flex: none; }
                .formula { display: flex; align-items: center; height: 27px; padding-left: 3px; box-sizing: border-box; padding-bottom: 1px; flex: none; }
                .input { box-sizing: border-box; width: 973px; height: 17px; background: #fff; border: 1px solid #d0cecc; padding-left: 4px; line-height: 15px; }
                .sheet { display: flex; height: 534.500px; padding-top: 2px; box-sizing: border-box; flex: none; }
                .vertical { width: 10px; background: #cdcdcd; padding: 1px 2px 0 2.500px; box-sizing: border-box; }
                .vertical i { display: block; height: 256px; border-radius: 3px; background: #7e807e; }
                .horizontal { display: flex; align-items: center; justify-content: space-between; box-sizing: border-box; width: 1151px; height: 9.500px; padding: 0 1px 0 2px; background: #cdcdcd; flex: none; }
                .horizontal i { width: 531px; height: 6px; border-radius: 3px; background: #7e807e; }
                .horizontal b { width: 2px; height: 7px; background: #555; }
            </style>
            <menu-bar></menu-bar>
            <tool-strip class="standard" items="
                new:22:7 open:22:7 save:22:8 |:6 pdf:22 print:22 preview:22 |:5
                cut:22 copy:22 paste:21:8:dim |:6 brush:22 clear:21 |:4
                undo:22:9:dim redo:20:10:dim |:5 find:22 spell:21 |:5
                row:22:7 column:22:7 |:7 sort:22 asc:22 desc:22 filter:22 |:5
                image:22 chart:21 pivot:22 |:5 omega:22:8 link:22 comment:22 header:22 |:5
                range:21 freeze:22:8:on split:22 |:6 shapes:22"></tool-strip>
            <div class="format">
                <combo-box style="width:137px"><em>Calibri</em></combo-box>
                <combo-box style="width:67px;margin:0 4px 0 6px">11 pt</combo-box>
                <tool-strip items="
                    |:1 bold:22:0:on italic:22 underline:20:10 |:4 fontColor:22:8 fillColor:21:8 |:5
                    left:22 center:22:0:on right:23 |:4 top:22 middle:22:0:on bottom:23 |:4
                    wrap:23 |:4 merge1:22 merge2:22 merge3:22 |:4 currency:22:8 percent:22 number:22 date:22 |:5
                    addDecimal:22 delDecimal:22 |:6 indent:22 outdent:22 |:4
                    border:21:8 lineStyle:21:8 borderColor:22:8 |:6 conditional:21:8 |:5
                    ltr:22:0:on rtl:22 |:5 textLtr:22:0:on textTtb:21"></tool-strip>
            </div>
            <div class="middle">
                <div class="left">
                    <div class="formula">
                        <combo-box style="width:108px">A1</combo-box>
                        <tool-strip items="|:4 func:17 sigma:16:8 equals:17"></tool-strip>
                        <div class="input"><fit-text width="52">Aufgaben-ID</fit-text></div>
                        <drop-arrow big style="width:12px"></drop-arrow>
                    </div>
                    <div class="sheet">
                        <sheet-grid></sheet-grid>
                        <div class="vertical"><i></i></div>
                    </div>
                    <div class="horizontal"><i></i><b></b></div>
                    <sheet-tabs></sheet-tabs>
                </div>
                <side-bar></side-bar>
            </div>
            <status-bar></status-bar>
        `;
    }
}
customElements.define('calc-window', CalcWindow);
</script>
</body>
</html>
